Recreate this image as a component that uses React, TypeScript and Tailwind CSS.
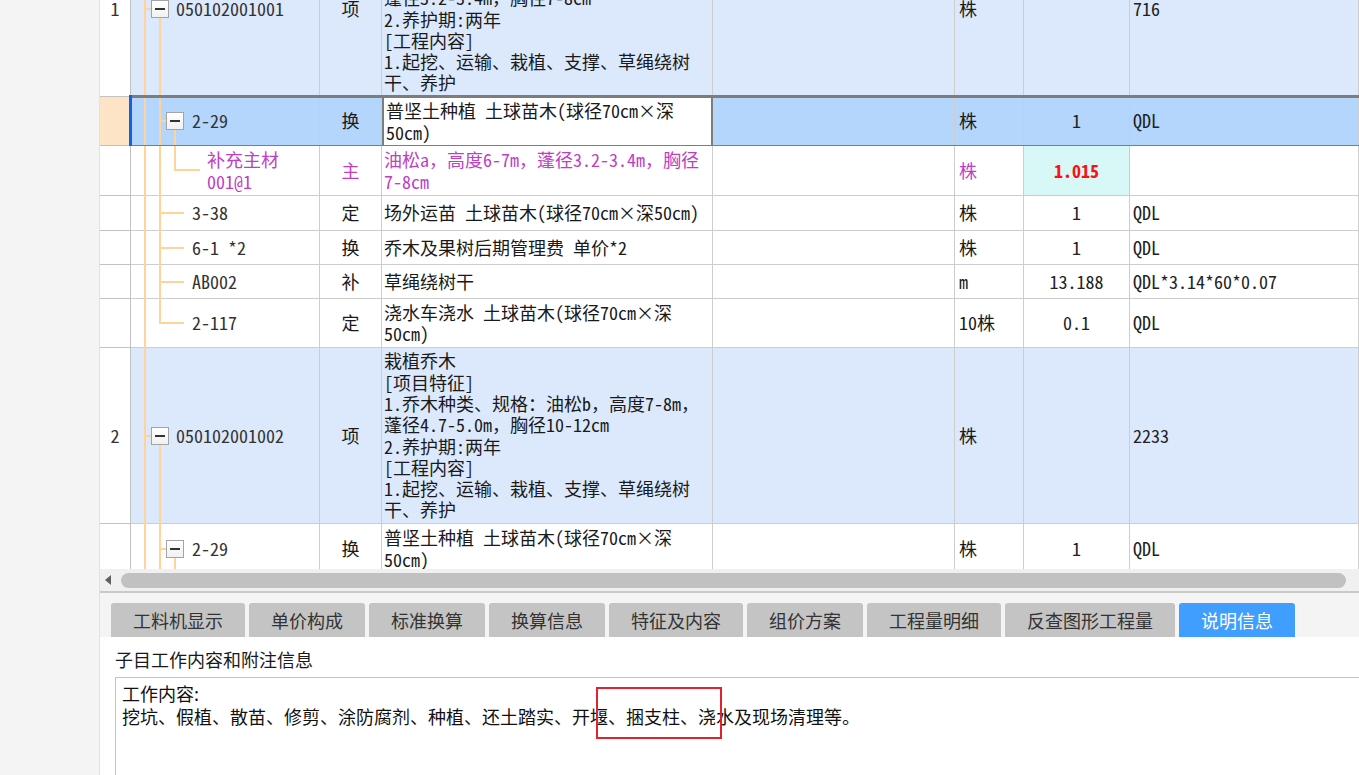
import React from "react";

type Row = {
  h: number;
  kind: "item" | "sel" | "sup" | "norm";
  num?: string;
  code: string[];
  level: number;
  cat: string;
  name: string[];
  unit: string;
  qty: string;
  expr: string;
  tree: { v: [number, number, number][]; box?: number; h?: [number, number, number] };
};

const rows: Row[] = [
  {
    h: 176,
    kind: "item",
    num: "1",
    code: ["050102001001"],
    level: 1,
    cat: "项",
    name: [
      "栽植乔木",
      "[项目特征]",
      "1.乔木种类、规格：油松a，高度6-7m，",
      "蓬径3.2-3.4m，胸径7-8cm",
      "2.养护期:两年",
      "[工程内容]",
      "1.起挖、运输、栽植、支撑、草绳绕树",
      "干、养护",
    ],
    unit: "株",
    qty: "",
    expr: "716",
    tree: { v: [[14, 0, 176], [29, 97, 176]], box: 20, h: [14, 20, 88] },
  },
  {
    h: 49,
    kind: "sel",
    code: ["2-29"],
    level: 2,
    cat: "换",
    name: ["普坚土种植 土球苗木(球径70cm×深", "50cm)"],
    unit: "株",
    qty: "1",
    expr: "QDL",
    tree: { v: [[14, 0, 49], [29, 0, 49], [44, 33, 49]], box: 35, h: [29, 35, 24] },
  },
  {
    h: 50,
    kind: "sup",
    code: ["补充主材", "001@1"],
    level: 4,
    cat: "主",
    name: ["油松a，高度6-7m，蓬径3.2-3.4m，胸径", "7-8cm"],
    unit: "株",
    qty: "1.015",
    expr: "",
    tree: { v: [[14, 0, 50], [29, 0, 50], [44, 0, 25]], h: [44, 69, 24] },
  },
  {
    h: 35,
    kind: "norm",
    code: ["3-38"],
    level: 3,
    cat: "定",
    name: ["场外运苗 土球苗木(球径70cm×深50cm)"],
    unit: "株",
    qty: "1",
    expr: "QDL",
    tree: { v: [[14, 0, 35], [29, 0, 35]], h: [29, 53, 17] },
  },
  {
    h: 34,
    kind: "norm",
    code: ["6-1 *2"],
    level: 3,
    cat: "换",
    name: ["乔木及果树后期管理费 单价*2"],
    unit: "株",
    qty: "1",
    expr: "QDL",
    tree: { v: [[14, 0, 34], [29, 0, 34]], h: [29, 53, 17] },
  },
  {
    h: 34,
    kind: "norm",
    code: ["AB002"],
    level: 3,
    cat: "补",
    name: ["草绳绕树干"],
    unit: "m",
    qty: "13.188",
    expr: "QDL*3.14*60*0.07",
    tree: { v: [[14, 0, 34], [29, 0, 34]], h: [29, 53, 17] },
  },
  {
    h: 49,
    kind: "norm",
    code: ["2-117"],
    level: 3,
    cat: "定",
    name: ["浇水车浇水 土球苗木(球径70cm×深", "50cm)"],
    unit: "10株",
    qty: "0.1",
    expr: "QDL",
    tree: { v: [[14, 0, 49], [29, 0, 25]], h: [29, 53, 24] },
  },
  {
    h: 176,
    kind: "item",
    num: "2",
    code: ["050102001002"],
    level: 1,
    cat: "项",
    name: [
      "栽植乔木",
      "[项目特征]",
      "1.乔木种类、规格：油松b，高度7-8m，",
      "蓬径4.7-5.0m，胸径10-12cm",
      "2.养护期:两年",
      "[工程内容]",
      "1.起挖、运输、栽植、支撑、草绳绕树",
      "干、养护",
    ],
    unit: "株",
    qty: "",
    expr: "2233",
    tree: { v: [[14, 0, 176], [29, 97, 176]], box: 20, h: [14, 20, 88] },
  },
  {
    h: 50,
    kind: "norm",
    code: ["2-29"],
    level: 2,
    cat: "换",
    name: ["普坚土种植 土球苗木(球径70cm×深", "50cm)"],
    unit: "株",
    qty: "1",
    expr: "QDL",
    tree: { v: [[14, 0, 50], [29, 0, 50], [44, 34, 50]], box: 35, h: [29, 35, 25] },
  },
];

const LINE = "bg-[#ffd39a]";

function Tree({ row }: { row: Row }) {
  const t = row.tree;
  return (
    <>
      {t.v.map(([x, y1, y2], i) => (
        <div
          key={i}
          className={`absolute w-[2px] ${LINE}`}
          style={{ left: x - 1, top: y1, height: y2 - y1 }}
        />
      ))}
      {t.h && (
        <div
          className={`absolute h-[2px] ${LINE}`}
          style={{ left: t.h[0], width: t.h[1] - t.h[0], top: t.h[2] - 1 }}
        />
      )}
      {t.box !== undefined && (
        <div
          className="absolute flex h-[18px] w-[18px] items-center justify-center border border-[#a3a3a3] bg-gradient-to-b from-white to-[#f1f1f1]"
          style={{ left: t.box, top: t.h ? t.h[2] - 9 : 0 }}
        >
          <div className="h-[2px] w-[10px] bg-[#333]" />
        </div>
      )}
    </>
  );
}

function TableRow({ row }: { row: Row }) {
  const isItem = row.kind === "item";
  const isSel = row.kind === "sel";
  const isSup = row.kind === "sup";
  const bg = isItem ? "bg-[#dce9fc]" : isSel ? "bg-[#b4d5fc]" : "bg-white";
  const txt = isSup ? "text-[#c03ec4]" : "text-[#1a1a1a]";
  const line = "border-r border-b border-[#cdcdcd]";
  const cell = `${line} ${bg}`;
  const codeLeft = row.level === 1 ? 45 : row.level === 4 ? 76 : 61;
  return (
    <div
      className={`relative grid grid-cols-[31px_189px_62px_331px_242px_69px_106px_1fr] ${txt}`}
      style={{ height: row.h }}
    >
      <div
        className={`flex items-center justify-center border-r border-b border-[#c2c2c2] ${
          isSel ? "bg-[#fde4c6]" : "bg-white"
        } text-[#333]`}
      >
        {row.num}
      </div>
      <div className={`relative ${cell}`}>
        <Tree row={row} />
        <div
          className="absolute inset-y-0 flex flex-col justify-center text-[#333]"
          style={{ left: codeLeft }}
        >
          {row.code.map((c, i) => (
            <div key={i} className={isSup ? "text-[#c03ec4]" : ""}>
              {c}
            </div>
          ))}
        </div>
      </div>
      <div className={`flex items-center justify-center ${cell}`}>{row.cat}</div>
      <div
        className={`flex flex-col justify-center pl-[2px] ${
          isSel ? "border-x-2 border-[#7d7d7d] bg-white" : cell
        }`}
      >
        {row.name.map((n, i) => (
          <div key={i} className="whitespace-pre">
            {n}
          </div>
        ))}
      </div>
      <div className={cell} />
      <div className={`flex items-center pl-[4px] ${cell}`}>{row.unit}</div>
      <div
        className={`flex items-center justify-center ${line} ${
          isSup ? "bg-[#d8f7f7] font-bold text-[#ff1010]" : `${bg} text-[#222]`
        }`}
      >
        {row.qty}
      </div>
      <div className={`flex items-center pl-[3px] text-[#222] ${cell}`}>{row.expr}</div>
      {isSel && (
        <>
          <div className="pointer-events-none absolute left-[31px] right-0 top-[-2px] bottom-[-2px] border-y-[3px] border-[#7d7d7d]" />
          <div className="absolute left-[29px] top-[-2px] bottom-[-2px] w-[3px] bg-[#0f62e8]" />
        </>
      )}
    </div>
  );
}

const tabs = [
  "工料机显示",
  "单价构成",
  "标准换算",
  "换算信息",
  "特征及内容",
  "组价方案",
  "工程量明细",
  "反查图形工程量",
  "说明信息",
];

export default function App() {
  return (
    <div className="relative flex h-[775px] w-[1359px] overflow-hidden bg-[#f4f4f4] font-['Noto_Sans_CJK_SC',sans-serif]">
      <div className="w-[100px] shrink-0 border-r border-[#e2e2e2] bg-[#f4f4f4]" />
      <div className="flex min-w-0 flex-1 flex-col bg-white">
        <div className="h-[569px] shrink-0 overflow-hidden">
          <div className="mt-[-79px] font-['Noto_Sans_Mono_CJK_SC','Noto_Sans_CJK_SC',monospace] text-[18px] leading-[21.3px]">
            {rows.map((r, i) => (
              <TableRow key={i} row={r} />
            ))}
          </div>
        </div>
        <div className="flex h-[22px] shrink-0 items-center bg-[#f0f0f0] pl-[5px] pr-[13px]">
          <div className="h-0 w-0 border-y-[5px] border-r-[6px] border-y-transparent border-r-[#606060]" />
          <div className="ml-[10px] h-[15px] flex-1 rounded-full bg-[#c1c1c1]" />
        </div>
        <div className="h-[2px] shrink-0 bg-[#c9c9c9]" />
        <div className="flex h-[44px] shrink-0 items-end gap-[4px] bg-[#f4f4f4] pl-[11px]">
          {tabs.map((t, i) => (
            <div
              key={t}
              className={`flex h-[34px] items-center rounded-t-[3px] px-[22px] text-[18px] ${
                i === tabs.length - 1
                  ? "bg-[#409eff] text-white"
                  : "bg-[#c4c4c4] text-[#333]"
              }`}
            >
              {t}
            </div>
          ))}
        </div>
        <div className="flex-1 bg-white pl-[15px]">
          <div className="pt-[9px] text-[18px] leading-[26px] text-[#1a1a1a]">子目工作内容和附注信息</div>
          <div className="mt-[5px] h-[200px] border border-r-0 border-[#c4c4c4] pl-[6px] pt-[4px] text-[18px] leading-[23px] text-[#111]">
            <div>工作内容:</div>
            <div>挖坑、假植、散苗、修剪、涂防腐剂、种植、还土踏实、开堰、捆支柱、浇水及现场清理等。</div>
          </div>
        </div>
      </div>
      <div className="pointer-events-none absolute left-[596px] top-[687px] h-[52px] w-[126px] border-2 border-[#e4222b]" />
    </div>
  );
}
